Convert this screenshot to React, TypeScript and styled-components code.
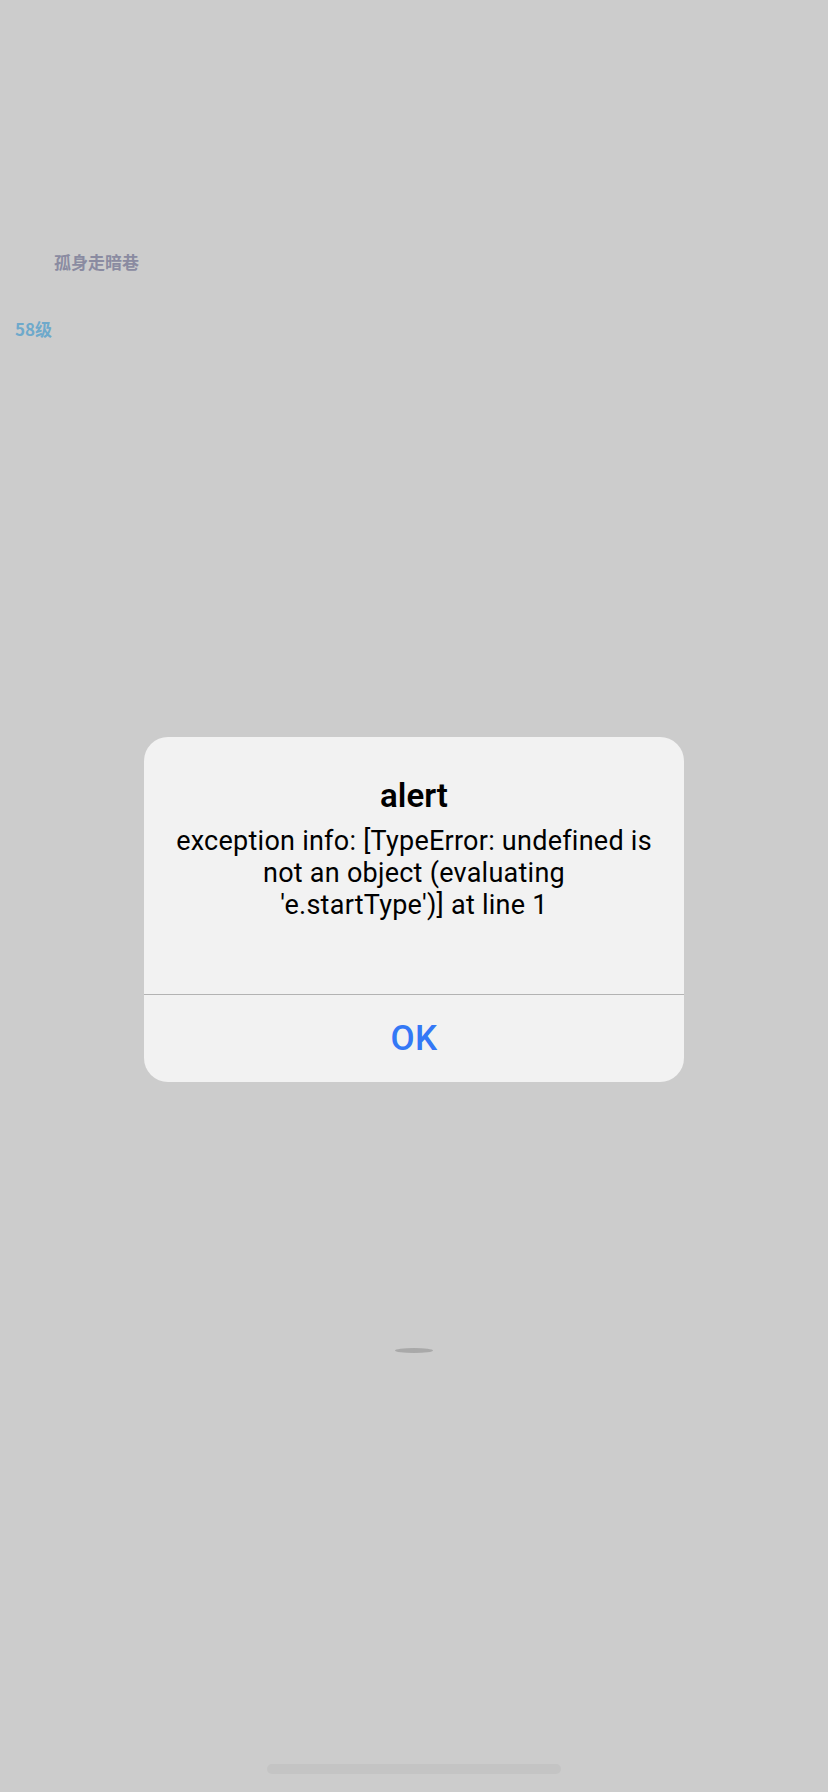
import styled, { createGlobalStyle } from "styled-components";

const GlobalStyle = createGlobalStyle`
  html, body {
    margin: 0;
    padding: 0;
    background-color: #cccccc;
  }
`;

const Screen = styled.div`
  position: relative;
  display: flex;
  flex-direction: column;
  width: 828px;
  height: 1792px;
  overflow: hidden;
  background-color: #cccccc;
  font-family: "Noto Sans CJK SC", "Noto Sans", sans-serif;
`;

const NickName = styled.div`
  margin: 252px 0 0 54px;
  font-size: 17px;
  line-height: 20px;
  font-weight: 700;
  color: #8a8ba1;
`;

const Level = styled.div`
  margin: 47px 0 0 15px;
  font-size: 17px;
  line-height: 20px;
  font-weight: 700;
  color: #6ea9cb;
`;

const Spinner = styled.div`
  align-self: center;
  width: 38px;
  height: 5px;
  margin-top: 1009px;
  border-radius: 50%;
  background-color: #a9a9a9;
`;

const HomeBar = styled.div`
  align-self: center;
  width: 294px;
  height: 10px;
  margin: auto 0 18px 0;
  border-radius: 5px;
  background-color: #c4c4c4;
`;

const Overlay = styled.div`
  position: absolute;
  inset: 0;
  display: flex;
  justify-content: center;
  align-items: flex-start;
  padding-top: 737px;
  box-sizing: border-box;
`;

const AlertBox = styled.div`
  display: flex;
  flex-direction: column;
  width: 540px;
  height: 345px;
  border-radius: 24px;
  background-color: #f2f2f2;
  overflow: hidden;
  font-family: Roboto, "Noto Sans", sans-serif;
`;

const AlertBody = styled.div`
  flex: 1;
  display: flex;
  flex-direction: column;
  align-items: center;
  padding: 41px 20px 0;
  text-align: center;
  color: #000000;
`;

const AlertTitle = styled.div`
  font-size: 33px;
  line-height: 36px;
  font-weight: 600;
`;

const AlertMessage = styled.div`
  margin-top: 11px;
  font-size: 27px;
  line-height: 32px;
  font-weight: 400;
  letter-spacing: 0.25px;
  white-space: nowrap;
`;

const AlertButton = styled.button`
  height: 88px;
  border: none;
  border-top: 1px solid #b3b3b3;
  background: transparent;
  font-family: inherit;
  font-size: 35px;
  font-weight: 500;
  letter-spacing: 0.5px;
  color: #3478f6;
  cursor: pointer;
`;

export default function App(): JSX.Element {
  return (
    <>
      <GlobalStyle />
      <Screen>
        <NickName>孤身走暗巷</NickName>
        <Level>58级</Level>
        <Spinner />
        <HomeBar />
        <Overlay>
          <AlertBox>
            <AlertBody>
              <AlertTitle>alert</AlertTitle>
              <AlertMessage>
                exception info: [TypeError: undefined is
                <br />
                not an object (evaluating
                <br />
                'e.startType')] at line 1
              </AlertMessage>
            </AlertBody>
            <AlertButton>OK</AlertButton>
          </AlertBox>
        </Overlay>
      </Screen>
    </>
  );
}
